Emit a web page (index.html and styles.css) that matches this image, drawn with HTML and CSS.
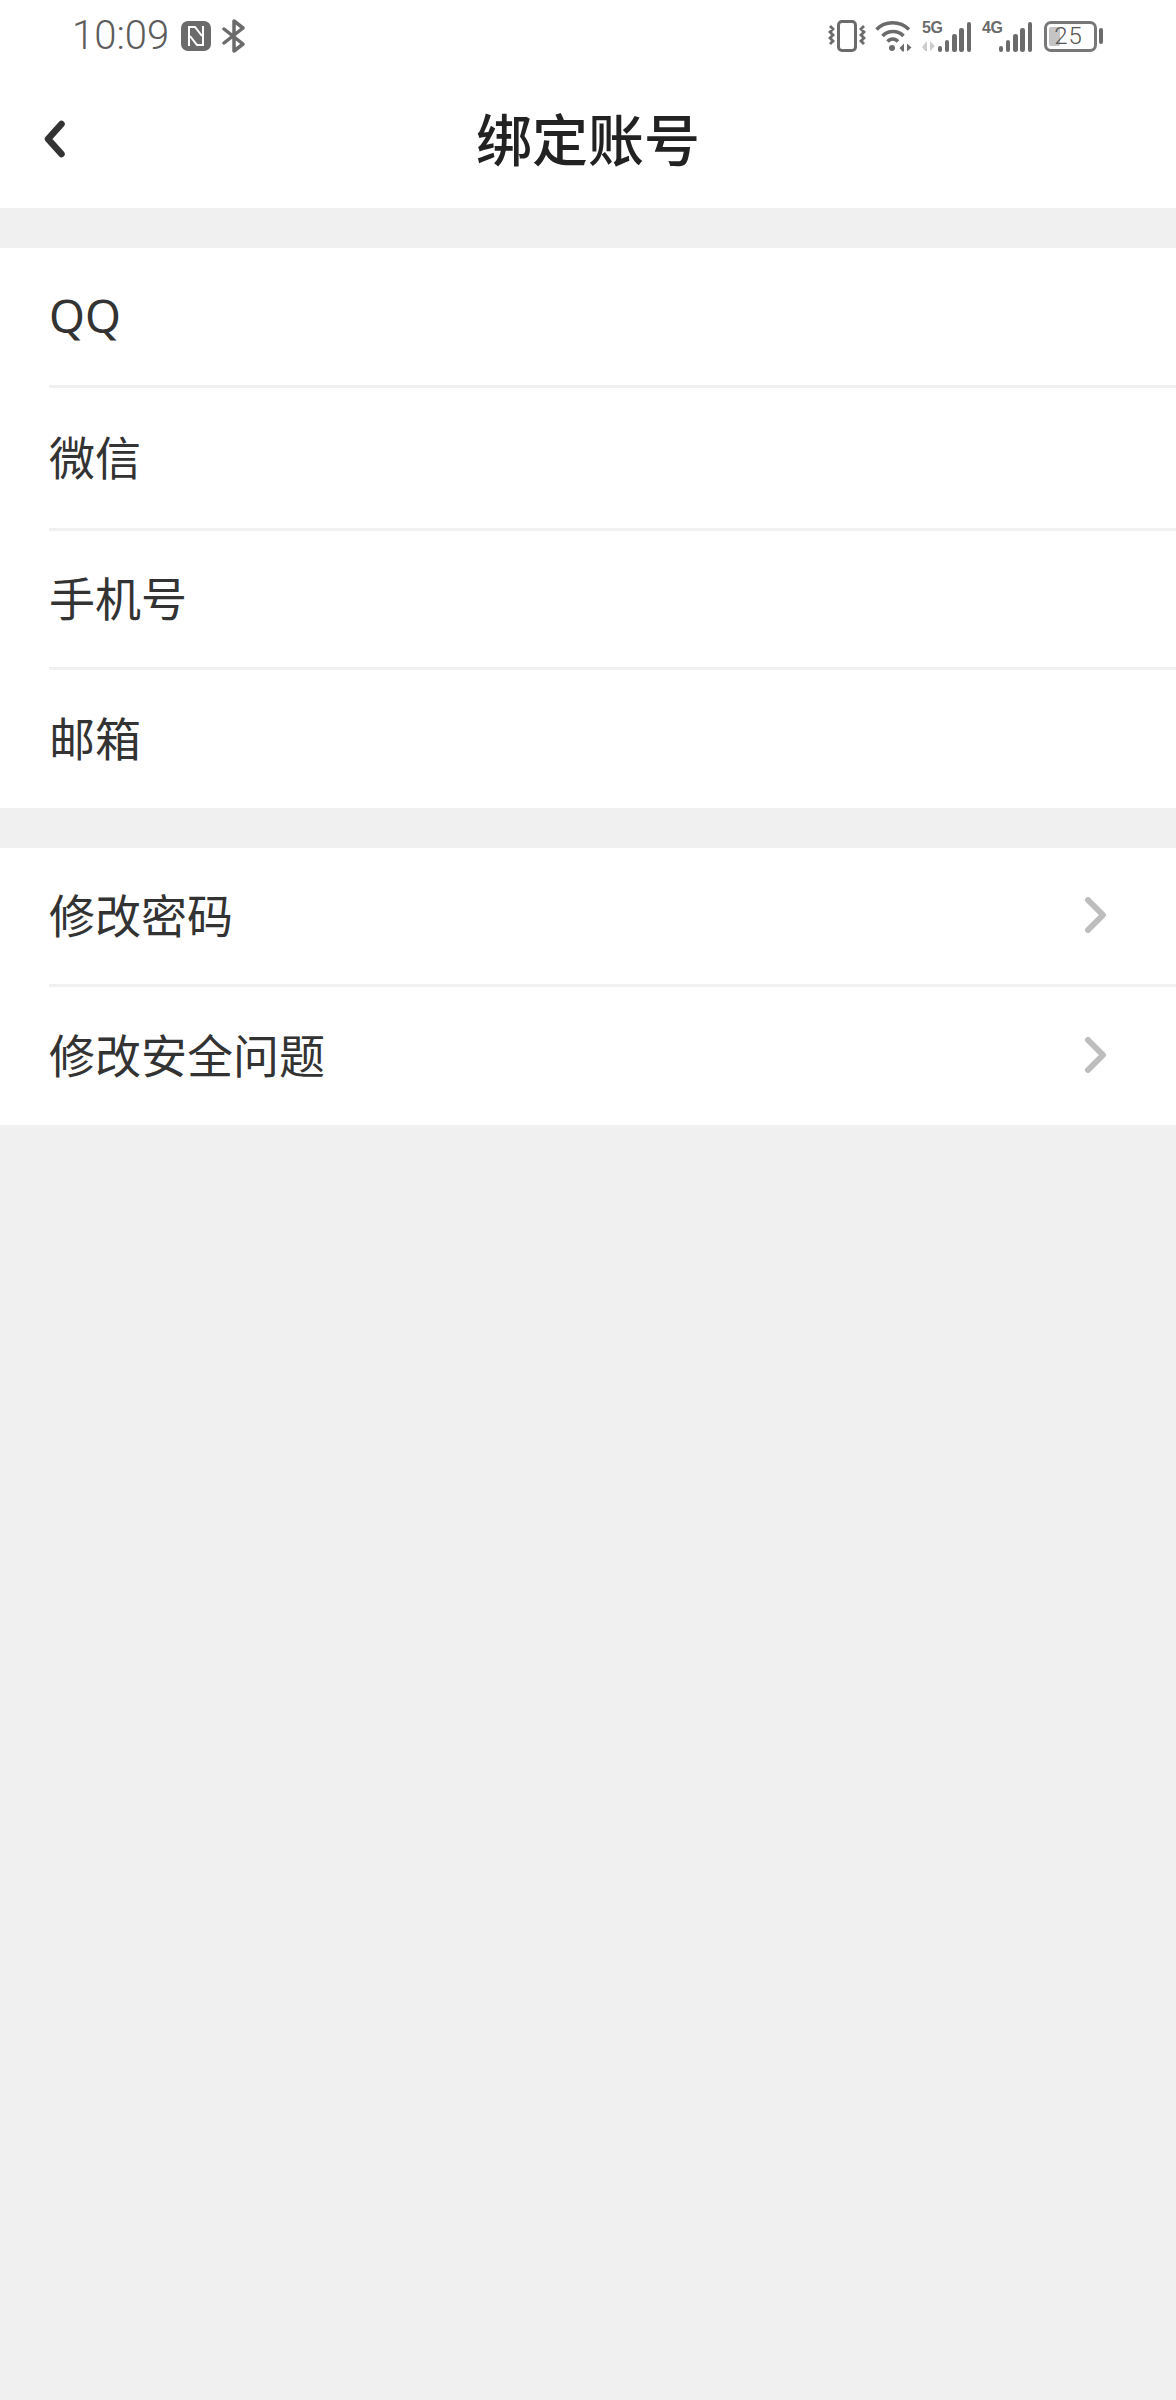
FILE: index.html
```html
<!DOCTYPE html>
<html lang="zh-CN">
<head>
<meta charset="utf-8">
<title>绑定账号</title>
<link rel="stylesheet" href="styles.css">
</head>
<body>
<div class="page">
  <header class="top">
    <div class="status">
      <div class="status-left">
        <span class="time">10:09</span>
        <svg class="ic-nfc" viewBox="0 0 30 30"><rect width="30" height="30" rx="7" fill="#6b6b6b"/><path d="M8 25V6h6l7 9M22 5v19h-6l-7-9" fill="none" stroke="#fff" stroke-width="2"/></svg>
        <svg class="ic-bt" viewBox="0 0 24 34"><path d="M2 10l19 15-9 7V2l9 7L2 24" fill="none" stroke="#6b6b6b" stroke-width="3.500" stroke-linejoin="round" stroke-linecap="round"/></svg>
      </div>
      <div class="status-right">
        <svg class="ic-vib" viewBox="0 0 38 32"><rect x="10.500" y="1.500" width="17" height="29" rx="3.500" fill="none" stroke="#6b6b6b" stroke-width="3"/><path d="M2 6l3 3-3 3 3 3-3 3 3 3-3 3M36 6l-3 3 3 3-3 3 3 3-3 3 3 3" fill="none" stroke="#6b6b6b" stroke-width="2.800"/></svg>
        <svg class="ic-wifi" viewBox="0 0 37 32"><path d="M1.500 9.500C10 .5 25 .5 34 9.500M7.500 16C13 10 23 10 28.500 16M12.500 21.500C15.500 18 20 18 23 21.500" fill="none" stroke="#6b6b6b" stroke-width="3.500"/><circle cx="17" cy="28" r="3" fill="#6b6b6b"/><path d="M29 23.500v8h-1.500L24.500 28zM32 23.500v8l4.500-4z" fill="#6b6b6b"/></svg>
        <div class="sim">
          <span class="net">5G</span>
          <svg class="updown" viewBox="0 0 13 10"><path d="M5 0v10H3L0 6zM8 0v10l5-5z" fill="#cccccc"/></svg>
          <div class="bars"><i class="b0"></i><i class="b1"></i><i class="b2"></i><i class="b3"></i><i class="b4"></i></div>
        </div>
        <div class="sim sim2">
          <span class="net">4G</span>
          <div class="bars"><i class="b0"></i><i class="b1"></i><i class="b2"></i><i class="b3"></i><i class="b4"></i></div>
        </div>
        <div class="battery">
          <div class="cell"><span class="fill"></span><span class="level">25</span></div>
          <span class="nub"></span>
        </div>
      </div>
    </div>
    <nav class="nav">
      <svg class="back" viewBox="0 0 24 38"><path d="M19.500 4L6 19l13.500 15" fill="none" stroke="#333" stroke-width="6.500" stroke-linecap="round" stroke-linejoin="round"/></svg>
      <h1 class="title">绑定账号</h1>
    </nav>
  </header>
  <section class="group">
    <div class="row"><span class="label">QQ</span></div>
    <div class="row row-tall"><span class="label">微信</span></div>
    <div class="row"><span class="label">手机号</span></div>
    <div class="row row-end"><span class="label">邮箱</span></div>
  </section>
  <section class="group">
    <div class="row"><span class="label">修改密码</span><svg class="chev" viewBox="0 0 24 36"><path d="M4 3l15 15L4 33" fill="none" stroke="#bdbdbd" stroke-width="6" stroke-linecap="round" stroke-linejoin="round"/></svg></div>
    <div class="row row-end"><span class="label">修改安全问题</span><svg class="chev" viewBox="0 0 24 36"><path d="M4 3l15 15L4 33" fill="none" stroke="#bdbdbd" stroke-width="6" stroke-linecap="round" stroke-linejoin="round"/></svg></div>
  </section>
</div>
</body>
</html>
```
FILE: styles.css
```css
* { box-sizing: border-box; }
html, body { margin: 0; height: 100%; }
body { background: #f0f0f0; font-family: "Noto Sans", "Noto Sans CJK SC", sans-serif; color: #333; }
.page { min-height: 2400px; }
.top { background: #fff; height: 208px; }
.status { height: 72px; padding: 0 73px 0 72px; display: flex; justify-content: space-between; align-items: center; }
.status-left, .status-right { display: flex; align-items: center; }
.time { font-family: Roboto, sans-serif; font-weight: 300; font-size: 40px; line-height: 72px; color: #5c5c5c; }
.ic-nfc { width: 30px; height: 30px; margin-left: 12px; }
.ic-bt { width: 24px; height: 34px; margin-left: 11px; }
.status-right { gap: 10px; }
.ic-vib { width: 38px; height: 32px; margin-right: -1px; }
.ic-wifi { width: 37px; height: 32px; }
.sim { position: relative; width: 49px; height: 32px; display: flex; justify-content: flex-end; align-items: flex-end; }
.sim2 { width: 50px; margin-left: 1px; }
.net { position: absolute; left: 0; top: 0; font-family: "Liberation Sans Narrow", "Liberation Sans", sans-serif; font-weight: 700; font-size: 16px; line-height: 15px; letter-spacing: -0.5px; color: #6b6b6b; }
.updown { position: absolute; left: 0; bottom: 1px; width: 13px; height: 10px; }
.bars { display: flex; align-items: flex-end; gap: 2.750px; height: 32px; }
.bars i { display: block; width: 4.500px; background: #6b6b6b; border-radius: 2.250px; }
.b0 { height: 6px; }
.b1 { height: 12px; }
.b2 { height: 18px; }
.b3 { height: 24px; }
.b4 { height: 30px; }
.battery { display: flex; align-items: center; gap: 2px; margin-left: 2px; }
.cell { position: relative; width: 53px; height: 31px; padding-right: 4px; border: 3px solid #777; border-radius: 7px; display: flex; align-items: center; justify-content: center; }
.fill { position: absolute; left: 2px; top: 3px; bottom: 3px; width: 11px; background: #c4c4c4; border-radius: 2px; }
.level { position: relative; font-family: Roboto, sans-serif; font-weight: 300; font-size: 24px; line-height: 25px; letter-spacing: 1px; color: #555; }
.nub { width: 4px; height: 16px; background: #6b6b6b; border-radius: 2px; }
.nav { height: 136px; position: relative; display: flex; align-items: center; justify-content: center; padding-bottom: 3px; }
.back { position: absolute; left: 42px; top: 48px; width: 24px; height: 38px; }
.title { margin: 0; font-size: 56px; line-height: 70px; font-weight: 500; color: #222; }
.group { margin-top: 40px; background: #fff; }
.row { height: 139.500px; margin-left: 49px; padding-right: 68px; padding-bottom: 2px; display: flex; align-items: center; justify-content: space-between; border-bottom: 3px solid #f0f0f0; }
.row-tall { height: 143px; }
.row-end { height: 137.500px; border-bottom: 0; }
.label { font-size: 46px; line-height: 60px; color: #333; }
.chev { width: 24px; height: 36px; }
```
